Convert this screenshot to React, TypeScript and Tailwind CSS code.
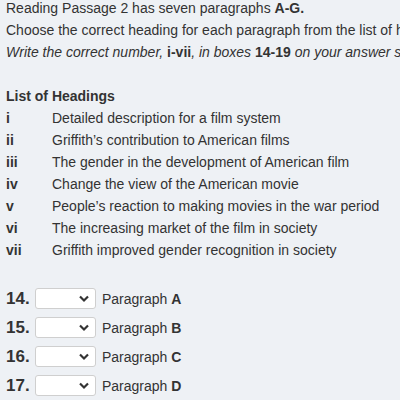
import React from "react";

const headings = [
  ["i", "Detailed description for a film system"],
  ["ii", "Griffith\u2019s contribution to American films"],
  ["iii", "The gender in the development of American film"],
  ["iv", "Change the view of the American movie"],
  ["v", "People\u2019s reaction to making movies in the war period"],
  ["vi", "The increasing market of the film in society"],
  ["vii", "Griffith improved gender recognition in society"],
];

const questions = [
  ["14", "A"],
  ["15", "B"],
  ["16", "C"],
  ["17", "D"],
];

export default function App() {
  return (
    <div
      className="w-[400px] h-[400px] overflow-hidden bg-[#eef1f5] text-[#333] text-[14px] leading-[22px] pl-[6px]"
      style={{ fontFamily: '"Liberation Sans", Arial, sans-serif' }}
    >
      <div className="-mt-[3px] whitespace-nowrap">
        <p>
          Reading Passage 2 has seven paragraphs <b>A-G.</b>
        </p>
        <p>Choose the correct heading for each paragraph from the list of headings below.</p>
        <p className="italic">
          Write the correct number, <b className="not-italic">i-vii</b>, in boxes{" "}
          <b className="not-italic">14-19</b> on your answer sheet.
        </p>
      </div>

      <div className="mt-[22px] whitespace-nowrap">
        <p className="font-bold">List of Headings</p>
        {headings.map(([num, text]) => (
          <div key={num} className="flex">
            <span className="w-[46px] font-bold">{num}</span>
            <span>{text}</span>
          </div>
        ))}
      </div>

      <div className="mt-[27px] flex flex-col gap-[8px]">
        {questions.map(([num, letter]) => (
          <div key={num} className="flex items-center h-[21px]">
            <span className="w-[29px] font-bold text-[17px]">{num}.</span>
            <div className="relative w-[61px] h-[21px] bg-white border border-[#cfcfcf] rounded-[3px]">
              <svg
                className="absolute right-[6px] top-[6px]"
                width="10"
                height="8"
                viewBox="0 0 10 8"
              >
                <path d="M1 1.5 L5 5.5 L9 1.5" fill="none" stroke="#333" strokeWidth="2.2" />
              </svg>
            </div>
            <span className="ml-[6px]">
              Paragraph <b>{letter}</b>
            </span>
          </div>
        ))}
      </div>
    </div>
  );
}
